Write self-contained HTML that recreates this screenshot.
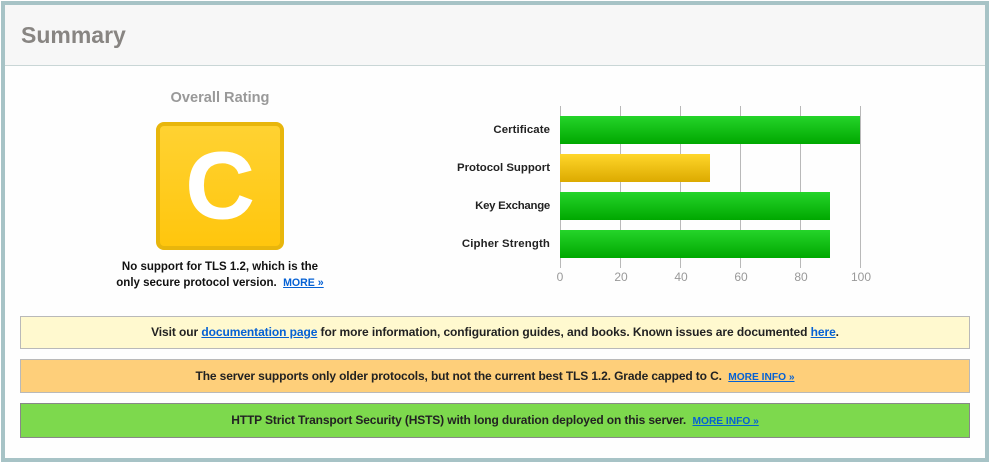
<!DOCTYPE html>
<html>
<head>
<meta charset="utf-8">
<style>
html,body{margin:0;padding:0;background:#fff;}
body{width:990px;height:464px;position:relative;overflow:hidden;font-family:"Liberation Sans",Arial,sans-serif;color:#111;}
a{color:#0561d4;text-decoration:underline;}
.abs{position:absolute;}
#frame{left:1px;top:1px;width:980px;height:453px;border:4px solid #a7c3c6;background:#fefefe;}
#head{left:5px;top:5px;width:980px;height:60px;background:#f7f7f7;border-bottom:1px solid #c9d6d6;}
#title{left:21px;top:21px;font-size:23px;line-height:28px;font-weight:bold;color:#888582;}
#or{left:120px;width:200px;top:90px;text-align:center;font-size:14.6px;line-height:17px;font-weight:bold;color:#999;}
#grade{left:156px;top:122px;width:120px;height:120px;border:4px solid #e8b60c;border-radius:8px;background:linear-gradient(#ffd232,#ffc60d);color:#fff;font-weight:bold;font-size:95px;line-height:120px;text-align:center;-webkit-text-stroke:1px #fff;}
#why{left:100px;width:240px;top:259px;text-align:center;font-size:11.5px;line-height:16px;font-weight:bold;}
#why a{font-size:10.6px;}
.gl{position:absolute;top:106px;width:1px;height:162px;background:#b9b9b9;}
.bar{position:absolute;left:560px;height:28px;background:linear-gradient(#25d42a,#00a800);}
.bar.y{background:linear-gradient(#ffd62a,#dcaa00);}
.lab{position:absolute;left:400px;width:150px;text-align:right;font-size:11.4px;line-height:14px;font-weight:bold;color:#222;}
.tick{position:absolute;top:270px;width:40px;text-align:center;font-size:12px;line-height:14px;color:#999;}
.note{position:absolute;left:20px;width:948px;border:1px solid #b9b9b9;text-align:center;font-size:12px;font-weight:bold;color:#222;}
.note .m{font-size:10.2px;letter-spacing:0;}
</style>
</head>
<body>
<div id="frame" class="abs"></div>
<div id="head" class="abs"></div>
<div id="title" class="abs">Summary</div>
<div id="or" class="abs">Overall Rating</div>
<div id="grade" class="abs">C</div>
<div id="why" class="abs">No support for TLS 1.2, which is the<br>only secure protocol version.&nbsp; <a href="#">MORE »</a></div>

<div class="gl" style="left:560px"></div>
<div class="gl" style="left:620px"></div>
<div class="gl" style="left:680px"></div>
<div class="gl" style="left:740px"></div>
<div class="gl" style="left:800px"></div>
<div class="gl" style="left:860px"></div>

<div class="bar" style="top:116px;width:300px"></div>
<div class="bar y" style="top:154px;width:150px"></div>
<div class="bar" style="top:192px;width:270px"></div>
<div class="bar" style="top:230px;width:270px"></div>

<div class="lab" style="top:123px;letter-spacing:.08px">Certificate</div>
<div class="lab" style="top:161px">Protocol Support</div>
<div class="lab" style="top:199px;letter-spacing:-.25px">Key Exchange</div>
<div class="lab" style="top:237px;letter-spacing:.14px">Cipher Strength</div>

<div class="tick" style="left:540px">0</div>
<div class="tick" style="left:601px">20</div>
<div class="tick" style="left:661px">40</div>
<div class="tick" style="left:721px">60</div>
<div class="tick" style="left:781px">80</div>
<div class="tick" style="left:841px">100</div>

<div class="note" style="top:316px;height:31px;line-height:31px;background:#fff9cf;letter-spacing:-.08px;">Visit our <a href="#">documentation page</a> for more information, configuration guides, and books. Known issues are documented <a href="#">here</a>.</div>
<div class="note" style="top:359px;height:32px;line-height:32px;background:#fecf7a;letter-spacing:-.125px;">The server supports only older protocols, but not the current best TLS 1.2. Grade capped to C.&nbsp; <a class="m" href="#">MORE INFO »</a></div>
<div class="note" style="top:403px;height:33px;line-height:33px;background:#7dd94d;border-color:#888;letter-spacing:-.135px;">HTTP Strict Transport Security (HSTS) with long duration deployed on this server.&nbsp; <a class="m" href="#">MORE INFO »</a></div>
</body>
</html>
